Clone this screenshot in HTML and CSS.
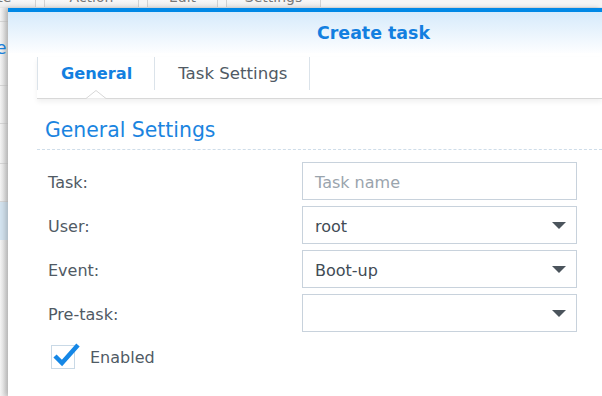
FILE: index.html
```html
<!DOCTYPE html>
<html lang="en">
<head>
  <meta charset="UTF-8" />
  <title>Create task</title>
  <link rel="stylesheet" href="styles.css">
</head>
<body>
  <div class="toolbar">
    <span class="tb-btn first"><span>Create</span></span>
    <span class="tb-btn w94"><span>Action</span></span>
    <span class="tb-btn w70"><span>Edit</span></span>
    <span class="tb-btn w94"><span>Settings</span></span>
  </div>
  <div class="side">
    <div class="row r1"></div>
    <div class="row r2"><span class="side-text">e</span></div>
    <div class="row r3"></div>
    <div class="row r4"></div>
    <div class="row r5"></div>
    <div class="row selected"></div>
  </div>
  <div class="dialog">
    <div class="dlg-head">
      <h1>Create task</h1>
    </div>
    <div class="tabs">
      <div class="tab active">General
        <svg class="notch" width="20" height="9" viewBox="0 0 20 9"><polyline points="0,8.5 10,0.5 20,8.5" fill="#fff" stroke="#d8d8d8" stroke-width="1"/></svg>
      </div>
      <div class="tab">Task Settings</div>
    </div>
    <div class="dlg-body">
      <h2>General Settings</h2>
      <div class="form">
        <div class="field">
          <label>Task:</label>
          <div class="input placeholder">Task name</div>
        </div>
        <div class="field">
          <label>User:</label>
          <div class="input select">root<span class="caret"></span></div>
        </div>
        <div class="field">
          <label>Event:</label>
          <div class="input select">Boot-up<span class="caret"></span></div>
        </div>
        <div class="field">
          <label>Pre-task:</label>
          <div class="input select"><span class="caret"></span></div>
        </div>
      </div>
      <div class="check">
        <span class="box">
          <svg class="tick" width="30" height="28" viewBox="0 0 30 28"><polyline points="4,14 11,21 27,3" fill="none" stroke="#1587e6" stroke-width="4.5" stroke-linejoin="miter"/></svg>
        </span>
        <span>Enabled</span>
      </div>
    </div>
  </div>
</body>
</html>
```

FILE: styles.css
```css
body {
  margin: 0;
  width: 602px;
  height: 396px;
  overflow: hidden;
  display: grid;
  grid-template-columns: 8px 1fr;
  grid-template-rows: 8px 1fr;
  font-family: "DejaVu Sans", Verdana, sans-serif;
  font-size: 16px;
  color: #505a64;
  background: #f3f3f3;
}
.toolbar {
  grid-column: 1 / -1;
  display: flex;
  gap: 8px;
  overflow: hidden;
  background: #f5f5f5;
  border-bottom: 1px solid #e6e6e6;
}
.tb-btn {
  flex: none;
  height: 8px;
  line-height: 0;
  font-size: 14px;
  color: #777;
  text-align: center;
  overflow: hidden;
  background: linear-gradient(#f8f8f8, #ececec);
  border: 1px solid #d2d2d2;
  border-top: none;
  box-sizing: border-box;
}
.tb-btn span {
  position: relative;
  top: -3px;
}
.tb-btn.first {
  width: 96px;
  margin-left: -60px;
}
.tb-btn.w94 {
  width: 95px;
}
.tb-btn.w70 {
  width: 71px;
}
.side {
  background: linear-gradient(to right, #f4f4f4, #dcdcdc);
  overflow: hidden;
}
.row {
  border-bottom: 1px solid #d6d6d6;
  box-sizing: border-box;
}
.r1 { height: 14px; }
.r2 { height: 48px; }
.r3 { height: 38px; }
.r4 { height: 40px; }
.r5 { height: 38px; }
.row.selected {
  height: 38px;
  background: #d3e3ef;
  border-bottom: none;
}
.side-text {
  display: block;
  margin-top: 16px;
  margin-left: -4px;
  color: #1a84e0;
  font-size: 17px;
}
.dialog {
  background: #fff;
  border-top: 4px solid #0088e6;
  box-shadow: -3px 0 5px rgba(0, 0, 0, 0.18);
  overflow: hidden;
}
.dlg-head {
  height: 41px;
  background: linear-gradient(#d6eafb, #fdfeff);
}
h1 {
  margin: 0;
  padding-left: 309px;
  line-height: 43px;
  font-size: 17.4px;
  font-weight: bold;
  color: #137fe0;
}
.tabs {
  display: flex;
  height: 41px;
  margin: 4px 0 0 29px;
  border-bottom: 1px solid #d8d8d8;
  box-shadow: 0 3px 5px rgba(0, 0, 0, 0.06);
}
.tab {
  position: relative;
  height: 33px;
  line-height: 34px;
  padding: 0 22px 0 23px;
  font-size: 16.6px;
  border-left: 1px solid #dbe3ea;
  color: #505a64;
}
.tab:last-child {
  border-right: 1px solid #dbe3ea;
}
.tab.active {
  color: #137fe0;
  font-weight: bold;
  font-size: 16.2px;
}
.notch {
  position: absolute;
  left: 48px;
  top: 33px;
}
.dlg-body {
  padding: 16px 0 0 29px;
}
h2 {
  margin: 0 0 0 8px;
  font-size: 20.4px;
  font-weight: normal;
  line-height: 30px;
  color: #1a84e0;
}
.form {
  border-top: 1px dashed #cfdde9;
  margin-top: 4px;
  padding-top: 12px;
  display: flex;
  flex-direction: column;
  gap: 6px;
}
.field {
  display: flex;
  align-items: center;
}
.field label {
  width: 254px;
  padding-left: 11px;
  padding-top: 2px;
}
.input {
  position: relative;
  width: 275px;
  height: 38px;
  box-sizing: border-box;
  border: 1px solid #c8d2dc;
  padding: 2px 0 0 12px;
  line-height: 36px;
  color: #414b55;
}
.input.placeholder {
  color: #9aa4ad;
}
.caret {
  position: absolute;
  right: 10px;
  top: 15px;
  width: 0;
  height: 0;
  border-left: 7.5px solid transparent;
  border-right: 7.5px solid transparent;
  border-top: 7px solid #4b545c;
}
.check {
  display: flex;
  align-items: center;
  gap: 15px;
  margin: 13px 0 0 14px;
}
.box {
  position: relative;
  width: 24px;
  height: 24px;
  box-sizing: border-box;
  border: 1px solid #c9d9e6;
}
.tick {
  position: absolute;
  left: -1px;
  top: -4px;
}
```
